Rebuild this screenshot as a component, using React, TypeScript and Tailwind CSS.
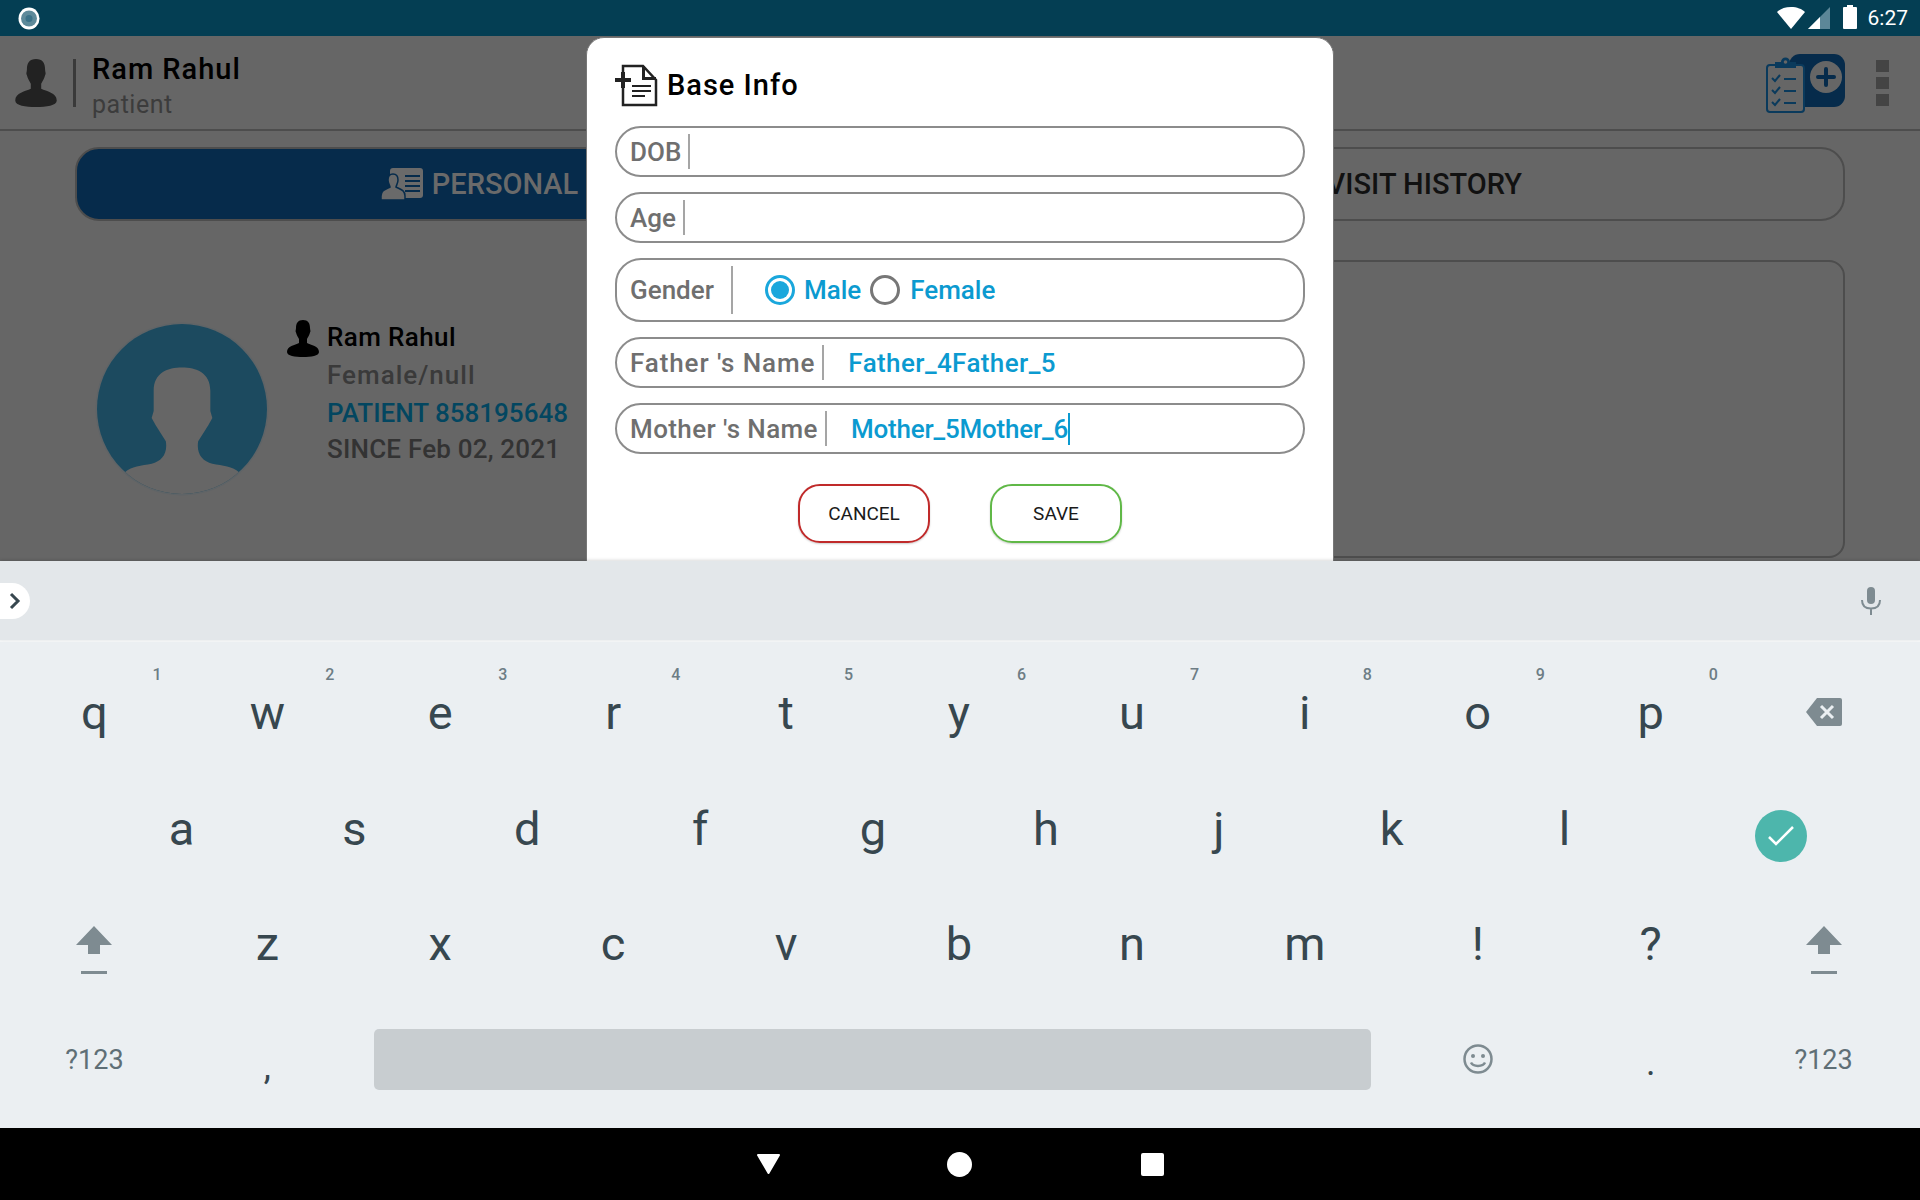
import React from "react";

const ui = { fontFamily: '"Roboto", "Liberation Sans", sans-serif' };
const kb = { fontFamily: 'Roboto, sans-serif' };

function Person({ className, color }: { className: string; color: string }) {
  return (
    <svg viewBox="0 0 32 37" className={className}>
      <path
        fill={color}
        d="M16 0C11 0 9 3 9 8C9 10 8 11 9 12.500C9.500 15 11 17 12 19L12 23C8 25 0 26 0 32C0 36 8 37 16 37C24 37 32 36 32 32C32 26 24 25 20 23L20 19C21 17 22.500 15 23 12.500C24 11 23 10 23 8C23 3 21 0 16 0Z"
      />
    </svg>
  );
}

function Field({ label, value, caret, tall, labelClass, valueClass, children }: { label: string; value?: string; caret?: boolean; tall?: boolean; labelClass?: string; valueClass?: string; children?: React.ReactNode }) {
  return (
    <div className={`flex items-center rounded-[26px] border-2 border-[#8c8c8c] pl-[13px] ${tall ? "h-[64px]" : "h-[51px]"}`}>
      <span className={`text-[26px] leading-none font-medium text-[#6f6f6f] whitespace-nowrap ${labelClass ?? ""}`}>{label}</span>
      <span className={`w-[2px] bg-[#a5a5a5] ${tall ? "h-[48px] ml-[17px]" : "h-[35px] ml-[7px]"}`} />
      {value && <span className={`ml-[24px] text-[26px] leading-none font-medium text-[#0b9ad0] whitespace-nowrap ${valueClass ?? ""}`}>{value}</span>}
      {caret && <span className="w-[2px] h-[32px] bg-[#0b9ad0]" />}
      {children}
    </div>
  );
}

function Key({ c, n }: { c: string; n?: string }) {
  return (
    <div className="relative flex items-center justify-center h-[115.5px] text-[47px] leading-none text-[#37474f]">
      <span className="relative top-[-2px]">{c}</span>
      {n && <span className="absolute left-[calc(50%+58px)] top-[10px] text-[16px] font-medium leading-none text-[#6d7d85]">{n}</span>}
    </div>
  );
}

function Shift() {
  return (
    <div className="flex items-start justify-center h-[115.5px]">
      <svg viewBox="0 0 36 48" className="w-[36px] h-[48px] mt-[38px]">
        <path fill="#7e8b91" d="M18 0L36 19H24V28H12V19H0Z" />
        <rect x="5" y="45" width="26" height="3" fill="#7e8b91" />
      </svg>
    </div>
  );
}

export default function App() {
  const row1 = [["q", "1"], ["w", "2"], ["e", "3"], ["r", "4"], ["t", "5"], ["y", "6"], ["u", "7"], ["i", "8"], ["o", "9"], ["p", "0"]];
  const row2 = ["a", "s", "d", "f", "g", "h", "j", "k", "l"];
  const row3 = ["z", "x", "c", "v", "b", "n", "m", "!", "?"];
  return (
    <div className="w-[1920px] h-[1200px] flex flex-col overflow-hidden bg-black" style={ui}>
      {/* status bar */}
      <div className="h-[36px] shrink-0 bg-[#043e53] flex items-center pl-[18px] pr-[12px]">
        <svg viewBox="0 0 22 23" className="w-[22px] h-[23px]">
          <ellipse cx="11" cy="11.500" rx="10.500" ry="11" fill="#fff" />
          <circle cx="11" cy="11.500" r="8" fill="#5e8a9a" />
          <circle cx="11" cy="11.500" r="3.500" fill="#3b7288" />
        </svg>
        <div className="flex-1" />
        <svg viewBox="0 0 28 22" className="w-[28px] h-[22px]">
          <path fill="#fff" d="M14 22L0 5C3 2 8 0 14 0C20 0 25 2 28 5Z" />
        </svg>
        <svg viewBox="0 0 22 22" className="w-[22px] h-[22px] ml-[3px]">
          <path fill="#5c8798" d="M22 0V22H0Z" />
          <path fill="#fff" d="M12 10V22H0Z" />
        </svg>
        <div className="relative w-[14px] h-[22px] ml-[13px] bg-white rounded-[1px]">
          <span className="absolute left-[4px] top-[-2px] w-[6px] h-[2px] bg-white" />
        </div>
        <span className="ml-[11px] text-[21px] leading-none text-white" style={kb}>6:27</span>
      </div>

      {/* app */}
      <div className="relative h-[525px] shrink-0 bg-[#666666] overflow-hidden">
        <div className="h-[95px] border-b-2 border-[#4d4d4d] flex items-center pl-[15px] pr-[31px]">
          <Person className="w-[42px] h-[48px]" color="#222222" />
          <span className="ml-[16px] w-[3px] h-[48px] bg-[#3a3a3a]" />
          <div className="ml-[16px] mt-[6px] flex flex-col">
            <span className="text-[29px] leading-[36px] font-medium tracking-[1px] text-black">Ram Rahul</span>
            <span className="mt-[3px] text-[25px] leading-[30px] tracking-[0.5px] text-[#3c3c3c]">patient</span>
          </div>
          <div className="flex-1" />
          <svg viewBox="0 0 79 59" className="w-[79px] h-[59px] mt-[2px]">
            <rect x="23" y="0" width="56" height="53" rx="11" fill="#062b4b" />
            <circle cx="60" cy="23" r="16" fill="#666666" />
            <path d="M60 15V31M52 23H68" stroke="#062b4b" strokeWidth="4" strokeLinecap="round" />
            <rect x="1" y="11" width="37" height="47" rx="3" fill="#666666" stroke="#0a3a5c" strokeWidth="2" />
            <path fill="#0a3a5c" d="M9 8H15A4.500 4.500 0 0 1 24 8H30V14H9Z" />
            <circle cx="19.500" cy="8" r="1.800" fill="#666666" />
            <path d="M6 24L9 27L14 21M6 36L9 39L14 33M6 48L9 51L14 45M18 25H30M18 37H30M18 49H30" fill="none" stroke="#0a3a5c" strokeWidth="2" />
          </svg>
          <div className="ml-[31px] flex flex-col gap-[5px] mt-[1px]">
            <span className="w-[13px] h-[12px] bg-[#444444]" />
            <span className="w-[13px] h-[12px] bg-[#444444]" />
            <span className="w-[13px] h-[12px] bg-[#444444]" />
          </div>
        </div>

        <div className="mt-[16px] ml-[75px] mr-[75px] flex h-[74px] gap-[10px]">
          <div className="w-[809px] rounded-[24px] border-2 border-[#4d4d4d] bg-[#062b4b] flex items-center justify-center">
            <svg viewBox="0 0 42 32" className="w-[42px] h-[32px] mr-[9px]">
              <rect x="9" y="0" width="33" height="30" rx="3" fill="#6a6a6a" />
              <path d="M24 8H39M24 13H39M24 18H39M24 23H39" stroke="#062b4b" strokeWidth="2" />
              <path fill="#6a6a6a" stroke="#062b4b" strokeWidth="1.500" d="M12 6C8 6 7 9 7 12C7 15 8.500 17 9 19C5 21 0 22 0 28V32H24V28C24 22 19 21 15 19C15.500 17 17 15 17 12C17 9 16 6 12 6Z" />
            </svg>
            <span className="text-[29px] leading-none font-medium text-[#6a6a6a]">PERSONAL</span>
          </div>
          <div className="flex-1 rounded-[24px] border-2 border-[#4d4d4d] flex items-center justify-end pr-[321px]">
            <span className="text-[29px] leading-none font-medium text-[#111111] whitespace-nowrap">VISIT HISTORY</span>
          </div>
        </div>

        <div className="mt-[39px] pl-[95px] pr-[75px] flex">
          <svg viewBox="0 0 172 172" className="w-[174px] h-[174px] mt-[62px] shrink-0">
            <defs>
              <clipPath id="av"><circle cx="86" cy="86" r="84" /></clipPath>
            </defs>
            <circle cx="86" cy="86" r="85.500" fill="#5f6467" />
            <circle cx="86" cy="86" r="84" fill="#1c4a5f" />
            <path clipPath="url(#av)" fill="#666666" d="M86 45C72 45 58 50 58 68L58 88L56 95L60 102L70 118C72 130 66 138 56 140C46 142 36 142 29 149L29 172L143 172L143 149C136 142 126 142 116 140C106 138 100 130 102 118L112 102L116 95L114 88L114 68C114 50 100 45 86 45Z" />
          </svg>
          <div className="ml-[18px] flex">
            <Person className="w-[32px] h-[37px] mt-[60px]" color="#000000" />
            <div className="ml-[8px] mt-[59px] flex flex-col text-[26px] leading-[37px] whitespace-nowrap font-medium">
              <span className="text-black tracking-[0.4px]">Ram Rahul</span>
              <span className="text-[#3a3a3a] tracking-[1px] mt-[1px]">Female/null</span>
              <span className="text-[#034660] mt-[1px]">PATIENT 858195648</span>
              <span className="text-[#333333] tracking-[0.2px] -mt-[1px]">SINCE Feb 02, 2021</span>
            </div>
          </div>
          <div className="ml-auto w-[900px] h-[298px] rounded-[16px] border-2 border-[#4d4d4d]" />
        </div>

        {/* dialog */}
        <div className="absolute left-[586px] top-[1px] w-[748px] h-[560px] rounded-[18px] bg-white border border-[#777777] px-[28px]">
          <div className="h-[88px] flex items-center pt-[7px]">
            <svg viewBox="0 0 43 43" className="w-[43px] h-[43px]">
              <path fill="none" stroke="#222222" strokeWidth="2.500" d="M8 9V2H28L41 16V41H8V24" />
              <path fill="#222222" d="M27 2H30V13H41V16H27Z" />
              <path stroke="#222222" strokeWidth="4" d="M0 16H16M8 8V24" />
              <path stroke="#222222" strokeWidth="2.200" d="M17 22H36M17 27H36M17 32H30" />
            </svg>
            <span className="ml-[9px] text-[29px] leading-none font-medium tracking-[1px] text-black">Base Info</span>
          </div>
          <div className="flex flex-col gap-[15px]">
            <Field label="DOB" />
            <Field label="Age" />
            <Field label="Gender" tall>
              <span className="ml-[32px] flex items-center justify-center w-[30px] h-[30px] rounded-full border-[3px] border-[#1aa7dc]">
                <span className="w-[18px] h-[18px] rounded-full bg-[#1aa7dc]" />
              </span>
              <span className="ml-[9px] text-[26px] leading-none font-medium text-[#0b9ad0]">Male</span>
              <span className="ml-[9px] w-[30px] h-[30px] rounded-full border-[3px] border-[#777777]" />
              <span className="ml-[10px] text-[26px] leading-none font-medium text-[#0b9ad0]">Female</span>
            </Field>
            <Field label="Father 's Name" labelClass="tracking-[0.9px]" value="Father_4Father_5" valueClass="tracking-[0.4px]" />
            <Field label="Mother 's Name" labelClass="tracking-[0.4px]" value="Mother_5Mother_6" valueClass="tracking-[-0.2px]" caret />
          </div>
          <div className="mt-[30px] flex justify-center gap-[60px]">
            <button className="w-[132px] h-[59px] rounded-[22px] border-[2.5px] border-[#c02a2a] text-[19px] leading-none text-[#1a1a1a] shadow-[0_1px_2px_rgba(0,0,0,0.2)]">CANCEL</button>
            <button className="w-[132px] h-[59px] rounded-[22px] border-[2.5px] border-[#60b847] text-[19px] leading-none text-[#1a1a1a] shadow-[0_1px_2px_rgba(0,0,0,0.2)]">SAVE</button>
          </div>
        </div>
      </div>

      {/* suggestion strip */}
      <div className="h-[79px] shrink-0 bg-[#e3e7ea] flex items-center justify-between pr-[39px] shadow-[0_-1px_3px_rgba(0,0,0,0.15)] relative" style={kb}>
        <div className="w-[30px] h-[36px] rounded-r-[18px] bg-white flex items-center justify-center">
          <svg viewBox="0 0 12 18" className="w-[12px] h-[18px]"><path d="M2 2L9 9L2 16" fill="none" stroke="#37474f" strokeWidth="3" /></svg>
        </div>
        <svg viewBox="0 0 20 28" className="w-[20px] h-[28px]">
          <rect x="6" y="0" width="8" height="17" rx="4" fill="#7e8b91" />
          <path d="M1 13C1 19 5 21.500 10 21.500C15 21.500 19 19 19 13M10 21V28" fill="none" stroke="#7e8b91" strokeWidth="2" />
        </svg>
      </div>
      <div className="h-[2px] shrink-0 bg-[#f4f6f7]" />

      {/* keyboard */}
      <div className="h-[486px] shrink-0 bg-[#ebeff2] pl-[8px] pr-[10px] pt-[15px]" style={kb}>
        <div className="grid grid-cols-11">
          {row1.map(([c, n]) => <Key key={c} c={c} n={n} />)}
          <div className="flex items-start justify-center h-[115.5px]">
            <svg viewBox="0 0 36 28" className="w-[36px] h-[28px] mt-[41px]">
              <path fill="#7e8b91" d="M11 0H34A2 2 0 0 1 36 2V26A2 2 0 0 1 34 28H11L0 14Z" />
              <path d="M15 8L27 20M27 8L15 20" stroke="#ebeff2" strokeWidth="3" />
            </svg>
          </div>
        </div>
        <div className="flex pl-[87px]">
          <div className="w-[1556px] grid grid-cols-9">
            {row2.map((c) => <Key key={c} c={c} />)}
          </div>
          <div className="flex-1 flex items-center justify-center">
            <div className="w-[52px] h-[52px] rounded-full bg-[#4db6ac] flex items-center justify-center mt-[12px]">
              <svg viewBox="0 0 28 22" className="w-[28px] h-[22px]"><path d="M2 12L9 19L26 2" fill="none" stroke="#fff" strokeWidth="2.500" /></svg>
            </div>
          </div>
        </div>
        <div className="grid grid-cols-11">
          <Shift />
          {row3.map((c) => <Key key={c} c={c} />)}
          <Shift />
        </div>
        <div className="grid grid-cols-11 h-[115px] items-center -mt-[2px]">
          <span className="text-center text-[27px] leading-none text-[#5f6f76] relative top-[1px]">?123</span>
          <span className="text-center text-[36px] leading-none text-[#37474f] relative top-[8px]">,</span>
          <div className="col-span-6 h-[61px] mx-[20px] rounded-[5px] bg-[#c8cdd0]" />
          <div className="flex justify-center">
            <svg viewBox="0 0 30 30" className="w-[30px] h-[30px]">
              <circle cx="15" cy="15" r="13.500" fill="none" stroke="#7e8b91" strokeWidth="2.500" />
              <circle cx="10" cy="12" r="2" fill="#7e8b91" />
              <circle cx="20" cy="12" r="2" fill="#7e8b91" />
              <path d="M8 18.500C10 23 20 23 22 18.500" fill="none" stroke="#7e8b91" strokeWidth="2.500" />
            </svg>
          </div>
          <span className="text-center text-[36px] leading-none text-[#37474f] relative top-[4px]">.</span>
          <span className="text-center text-[27px] leading-none text-[#5f6f76] relative top-[1px]">?123</span>
        </div>
      </div>

      {/* nav bar */}
      <div className="h-[72px] shrink-0 bg-black flex items-center justify-center">
        <div className="flex items-center">
          <svg viewBox="0 0 25 22" className="w-[25px] h-[22px] mr-[166px]"><path fill="#fff" stroke="#fff" strokeWidth="2" strokeLinejoin="round" d="M2 2H23L12.500 20Z" /></svg>
          <span className="w-[25px] h-[25px] rounded-full bg-white mr-[169px]" />
          <span className="w-[23px] h-[23px] rounded-[2px] bg-white" />
        </div>
      </div>
    </div>
  );
}
